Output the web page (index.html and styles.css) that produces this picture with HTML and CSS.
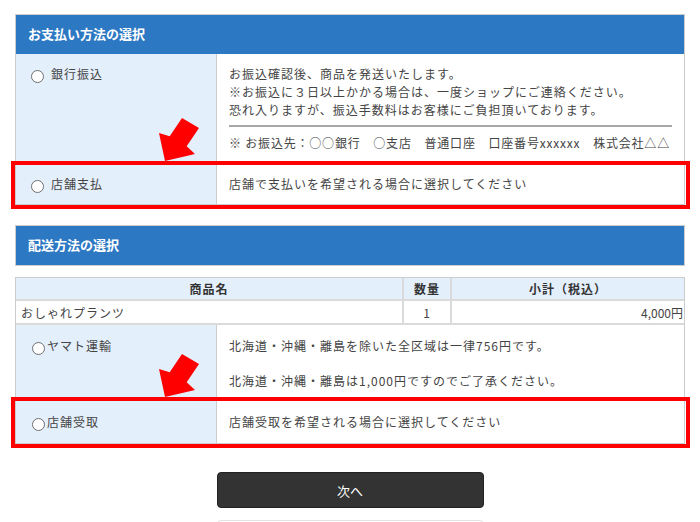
FILE: index.html
```html
<!DOCTYPE html>
<html lang="ja">
<head>
    <meta charset="UTF-8">
    <title>お支払い・配送方法の選択</title>
    <link rel="stylesheet" href="styles.css">
</head>
<body>
    <div class="page">
        <section class="panel">
            <h2 class="panel-title">お支払い方法の選択</h2>
            <div class="method-row">
                <label class="method-label"><span class="radio"></span>銀行振込</label>
                <div class="method-desc">
                    <p>お振込確認後、商品を発送いたします。<br>※お振込に３日以上かかる場合は、一度ショップにご連絡ください。<br>恐れ入りますが、振込手数料はお客様にご負担頂いております。</p>
                    <p class="bank-info">※ お振込先：○○銀行　○支店　普通口座　口座番号xxxxxx　株式会社△△</p>
                </div>
            </div>
            <div class="method-row highlight">
                <label class="method-label"><span class="radio"></span>店舗支払</label>
                <div class="method-desc">
                    <p>店舗で支払いを希望される場合に選択してください</p>
                </div>
                <svg class="arrow" width="48" height="50" viewBox="155 115 48 50">
                    <polygon points="182,118 199,128 186.7,146.3 195,154 165,161 159,133 169.7,136.3" fill="#ff0000"/>
                </svg>
            </div>
        </section>

        <section class="panel panel-ship">
            <h2 class="panel-title">配送方法の選択</h2>
        </section>

        <div class="ship-box">
            <table class="items">
                <thead>
                    <tr>
                        <th>商品名</th>
                        <th class="col-qty">数量</th>
                        <th class="col-sub">小計（税込）</th>
                    </tr>
                </thead>
                <tbody>
                    <tr>
                        <td class="name">おしゃれプランツ</td>
                        <td class="qty">1</td>
                        <td class="price">4,000円</td>
                    </tr>
                </tbody>
            </table>
            <div class="method-row ship-row">
                <label class="method-label tight"><span class="radio"></span>ヤマト運輸</label>
                <div class="method-desc">
                    <p>北海道・沖縄・離島を除いた全区域は一律756円です。</p>
                    <p class="second">北海道・沖縄・離島は1,000円ですのでご了承ください。</p>
                </div>
            </div>
            <div class="method-row ship-pickup highlight">
                <label class="method-label tight"><span class="radio"></span>店舗受取</label>
                <div class="method-desc">
                    <p>店舗受取を希望される場合に選択してください</p>
                </div>
                <svg class="arrow" width="48" height="50" viewBox="155 115 48 50">
                    <polygon points="182,118 199,128 186.7,146.3 195,154 165,161 159,133 169.7,136.3" fill="#ff0000"/>
                </svg>
            </div>
        </div>

        <button class="next-btn">次へ</button>
        <div class="back-btn"></div>
    </div>
</body>
</html>
```

FILE: styles.css
```css
:root {
    --blue: #2c78c3;
    --cell-bg: #e4effc;
    --line: #cccccc;
    --text: #444444;
}

body {
    margin: 0;
    font-family: "Noto Sans CJK JP", "Noto Sans", sans-serif;
    font-size: 12px;
    color: var(--text);
    background: #fff;
}

.page {
    padding: 14px 15px 0;
}

.panel {
    border: 1px solid var(--line);
}

.panel-title {
    margin: 0;
    height: 39px;
    line-height: 38px;
    padding-left: 12px;
    background: var(--blue);
    color: #fff;
    font-size: 13px;
    font-weight: bold;
}

.panel-ship {
    margin-top: 20px;
}

.method-row {
    display: grid;
    grid-template-columns: 201px 1fr;
    position: relative;
}

.method-row + .method-row {
    border-top: 1px solid var(--line);
}

.method-label {
    display: flex;
    align-items: flex-start;
    padding: 11px 0 0 15px;
    background: var(--cell-bg);
    border-right: 1px solid var(--line);
    line-height: 18px;
    letter-spacing: 1px;
}

.radio {
    flex: none;
    width: 11px;
    height: 11px;
    margin: 5px 7px 0 0;
    border: 1px solid #6f6f6f;
    border-radius: 50%;
    background: #fff;
}

.method-label.tight {
    padding-left: 16px;
}

.method-label.tight .radio {
    margin-right: 2px;
}

.method-desc {
    padding: 11px 12px 11px;
    line-height: 18px;
    letter-spacing: 1px;
}

.method-desc p {
    margin: 0;
}

.bank-info {
    margin-top: 6px !important;
    padding-top: 7px;
    border-top: 2px solid #a8a8a8;
    letter-spacing: 0.8px;
    white-space: nowrap;
}

.method-desc .second {
    margin-top: 17px;
}

/* red annotation frame + arrow */
.highlight::after {
    content: "";
    position: absolute;
    top: -3px;
    left: -5px;
    right: -6px;
    bottom: -5px;
    border: 4px solid #ff0000;
    pointer-events: none;
}

.arrow {
    position: absolute;
    left: 139px;
    top: -49px;
    z-index: 2;
}

.ship-box {
    margin-top: 11px;
    border: 1px solid var(--line);
}

.items {
    width: 100%;
    border-collapse: collapse;
    border-style: hidden;
}

.items th,
.items td {
    border: 2px solid #dadada;
    padding: 0;
    letter-spacing: 1px;
}

.items th {
    height: 21px;
    background: var(--cell-bg);
    font-weight: bold;
    color: #333;
}

.items td {
    height: 22px;
}

.items .col-qty {
    width: 46px;
}

.items .col-sub {
    width: 232px;
}

.items .name {
    padding-left: 5px;
}

.items .qty {
    text-align: center;
}

.items .price {
    text-align: right;
    padding-right: 1px;
    letter-spacing: 0;
}

.ship-row {
    border-top: 2px solid #dadada;
}

.ship-row .method-label,
.ship-row .method-desc {
    padding-top: 12px;
}

.ship-row .method-desc {
    padding-bottom: 9px;
}

.ship-pickup .method-label,
.ship-pickup .method-desc {
    padding-top: 13px;
}

.ship-pickup .method-desc {
    padding-bottom: 12px;
}

.next-btn {
    display: block;
    width: 267px;
    height: 36px;
    margin: 28px auto 0;
    background: #333;
    border: 1px solid #222;
    border-radius: 4px;
    color: #fff;
    font-family: "Noto Sans CJK JP", sans-serif;
    font-size: 13px;
}

.back-btn {
    width: 267px;
    height: 36px;
    margin: 12px auto 0;
    border: 1px solid #e2e2e2;
    border-radius: 4px;
    box-sizing: border-box;
}
```
